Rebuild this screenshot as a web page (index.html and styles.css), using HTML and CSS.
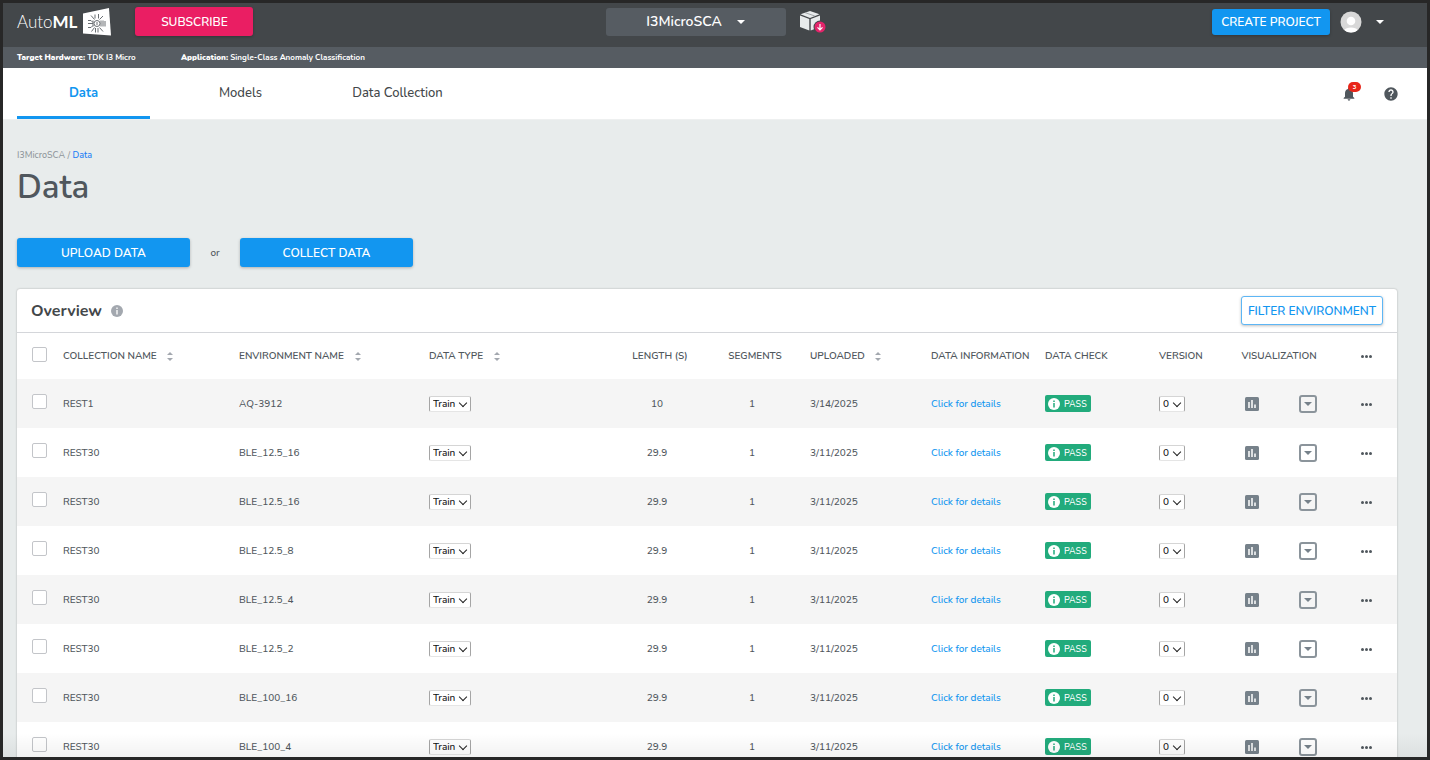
FILE: index.html
```html
<!DOCTYPE html>
<html lang="en">
<head>
  <meta charset="UTF-8">
  <meta name="viewport" content="width=device-width, initial-scale=1.0">
  <title>AutoML - Data</title>
  <link rel="stylesheet" href="styles.css">
</head>
<body>
  <div class="app">
    <header class="topbar">
      <div class="topbar-left">
        <a class="logo" href="#">
          <span class="logo-text">Auto<b>ML</b></span>
          <svg class="logo-mark" viewBox="0 0 28 28">
            <path d="M0 5.500 26 0 28 27.500 0 25.500z" fill="#fff"/>
            <g stroke="#6a6f73" stroke-width="1" fill="none">
              <circle cx="14" cy="15.500" r="3"/>
              <path d="M14 14v3 M10 12.500v6 M18 12.500v6"/>
              <path d="M5 12.500h3l2 2 M5 15.500h5 M5 19.500h3l2-2 M20 12.500v6 M22 13v5.500"/>
              <path d="M8 7.500l3.500 4 M12 6.500v4 M15.500 6v4.500 M20 8l-3.500 3.500 M8.500 23.500l3-4 M12.500 20v4.500 M15 20v4.500 M20 23.500l-3.500-4"/>
            </g>
          </svg>
        </a>
        <button class="btn btn-pink">SUBSCRIBE</button>
      </div>
      <div class="topbar-center">
        <button class="project-btn">I3MicroSCA <span class="caret"></span></button>
        <a class="package" href="#" aria-label="Download package">
          <svg width="28" height="24" viewBox="0 0 28 24">
            <path d="M11 1 20.500 4.300 11 8 1.500 4.300z" fill="#e8ebec"/>
            <path d="M1 5.500 10.300 9v11.500L1 17z" fill="#e8ebec"/>
            <path d="M11.700 9 21 5.500V17l-9.300 3.500z" fill="#e8ebec"/>
            <path d="M6 2.600 15.800 6" stroke="#8d9295" stroke-width=".8"/>
            <circle cx="21" cy="17" r="6.500" fill="#43474a"/>
            <circle cx="21" cy="17" r="5.500" fill="#e3246a"/>
            <path d="M21 14v5.500M18.500 17.300 21 19.800l2.500-2.500" stroke="#fff" stroke-width="1.200" fill="none"/>
          </svg>
        </a>
      </div>
      <div class="topbar-right">
        <button class="btn btn-create">CREATE PROJECT</button>
        <button class="user" aria-label="Account">
          <svg width="22" height="22" viewBox="0 0 22 22">
            <circle cx="11" cy="11" r="10.500" fill="#d8d8d8"/>
            <circle cx="11" cy="10" r="4.300" fill="#fff"/>
            <path d="M4.500 19.200C5.500 15.500 16.500 15.500 17.500 19.200 14 22.200 8 22.200 4.500 19.200z" fill="#fff"/>
          </svg>
          <span class="caret"></span>
        </button>
      </div>
    </header>

    <div class="infobar">
      <span class="hardware"><b>Target Hardware:</b> TDK I3 Micro</span>
      <span><b>Application:</b> Single-Class Anomaly Classification</span>
    </div>

    <nav class="tabs">
      <a class="tab active" href="#">Data</a>
      <a class="tab" href="#">Models</a>
      <a class="tab" href="#">Data Collection</a>
      <div class="tab-icons">
        <button class="bell" aria-label="Notifications">
          <svg width="16" height="16" viewBox="0 0 24 24" fill="#50575d"><path d="M12 22c1.100 0 2-.9 2-2h-4c0 1.100.9 2 2 2zm6-6v-5c0-3.070-1.640-5.640-4.500-6.320V4c0-.83-.67-1.500-1.500-1.500s-1.500.67-1.500 1.500v.68C7.630 5.360 6 7.920 6 11v5l-2 2v1h16v-1l-2-2z"/></svg>
          <span class="badge">3</span>
        </button>
        <button class="help" aria-label="Help">
          <svg width="16" height="16" viewBox="0 0 24 24" fill="#50575d"><path d="M12 2C6.480 2 2 6.480 2 12s4.480 10 10 10 10-4.480 10-10S17.520 2 12 2zm1 17h-2v-2h2v2zm2.070-7.750l-.9.920C13.450 12.900 13 13.500 13 15h-2v-.5c0-1.100.45-2.100 1.170-2.830l1.240-1.260c.37-.36.590-.86.590-1.410 0-1.100-.9-2-2-2s-2 .9-2 2H8c0-2.210 1.790-4 4-4s4 1.790 4 4c0 .88-.36 1.680-.93 2.250z"/></svg>
        </button>
      </div>
    </nav>

    <main class="content">
      <div class="breadcrumb">I3MicroSCA / <a href="#">Data</a></div>
      <h1>Data</h1>
      <div class="actions">
        <button class="btn btn-blue">UPLOAD DATA</button>
        <span class="or">or</span>
        <button class="btn btn-blue">COLLECT DATA</button>
      </div>

      <section class="card">
        <div class="card-header">
          <h2>Overview</h2>
          <svg width="12" height="12" viewBox="0 0 12 12"><circle cx="6" cy="6" r="6" fill="#a3a8af"/><path d="M6 2.500v1.500M6 5v4.500" stroke="#fff" stroke-width="1.300"/></svg>
          <button class="btn btn-outline">FILTER ENVIRONMENT</button>
        </div>
        <table>
          <colgroup>
            <col class="c-check"><col class="c-name"><col class="c-env"><col class="c-type"><col class="c-length">
            <col class="c-segments"><col class="c-uploaded"><col class="c-info"><col class="c-status"><col class="c-version">
            <col class="c-chart"><col class="c-drop"><col class="c-more">
          </colgroup>
          <thead>
            <tr>
              <th class="check"><input type="checkbox" aria-label="Select all"></th>
              <th>COLLECTION NAME <span class="sort"></span></th>
              <th>ENVIRONMENT NAME <span class="sort"></span></th>
              <th>DATA TYPE <span class="sort"></span></th>
              <th class="number">LENGTH (S)</th>
              <th class="number">SEGMENTS</th>
              <th>UPLOADED <span class="sort"></span></th>
              <th>DATA INFORMATION</th>
              <th>DATA CHECK</th>
              <th>VERSION</th>
              <th class="center" colspan="2">VISUALIZATION</th>
              <th class="center"><button class="more" aria-label="More"><i></i><i></i><i></i></button></th>
            </tr>
          </thead>
          <tbody id="rows"></tbody>
        </table>
      </section>
    </main>
  </div>
  <script>
    const data = [
      ['REST1', 'AQ-3912', '10', '3/14/2025'],
      ['REST30', 'BLE_12.5_16', '29.9', '3/11/2025'],
      ['REST30', 'BLE_12.5_16', '29.9', '3/11/2025'],
      ['REST30', 'BLE_12.5_8', '29.9', '3/11/2025'],
      ['REST30', 'BLE_12.5_4', '29.9', '3/11/2025'],
      ['REST30', 'BLE_12.5_2', '29.9', '3/11/2025'],
      ['REST30', 'BLE_100_16', '29.9', '3/11/2025'],
      ['REST30', 'BLE_100_4', '29.9', '3/11/2025']
    ];
    const rows = document.getElementById('rows');
    data.forEach(([name, env, length, uploaded]) => {
      const tr = document.createElement('tr');
      tr.innerHTML = `
        <td class="check"><input type="checkbox" aria-label="Select ${name}"></td>
        <td>${name}</td>
        <td>${env}</td>
        <td><span class="select"><select class="type" aria-label="Data type"><option>Train</option><option>Test</option></select></span></td>
        <td class="center">${length}</td>
        <td class="center">1</td>
        <td>${uploaded}</td>
        <td><a href="#">Click for details</a></td>
        <td><span class="pass"><svg width="12" height="12" viewBox="0 0 12 12"><circle cx="6" cy="6" r="6" fill="#fff"/><path d="M6 2.500v1.500M6 5v4.500" stroke="#22ab7c" stroke-width="1.500"/></svg>PASS</span></td>
        <td><span class="select"><select class="version" aria-label="Version"><option>0</option></select></span></td>
        <td class="center"><button class="icon-btn" aria-label="Chart"><svg width="14" height="14" viewBox="0 0 14 14"><rect width="14" height="14" rx="1.500" fill="#76818a"/><path d="M4 5v6M7 3v8M10 7.500v3.500" stroke="#fff" stroke-width="1.500"/></svg></button></td>
        <td class="center"><button class="drop" aria-label="Open"><span class="caret"></span></button></td>
        <td class="center"><button class="more" aria-label="More"><i></i><i></i><i></i></button></td>`;
      rows.appendChild(tr);
    });
  </script>
</body>
</html>
```
FILE: styles.css
```css
* {
  box-sizing: border-box;
}
body {
  margin: 0;
  font-family: Nunito, "Open Sans", sans-serif;
  font-size: 10px;
  font-weight: 500;
  color: #50575d;
  background-color: #e8ecec;
}
button, select, input {
  font-family: inherit;
  margin: 0;
}
button {
  border: none;
  padding: 0;
  background: none;
  cursor: pointer;
}
a {
  color: #1296f0;
  text-decoration: none;
}
svg {
  display: block;
}
.app {
  position: relative;
  height: 100vh;
  overflow: hidden;
  border: 3px solid #272727;
}
/* soft fade along the bottom edge */
.app::after {
  content: "";
  position: absolute;
  left: 0;
  right: 0;
  bottom: 0;
  height: 24px;
  background: linear-gradient(rgba(0, 0, 0, 0), rgba(0, 0, 0, 0.05));
  pointer-events: none;
}
.caret {
  width: 0;
  border: 4px solid transparent;
  border-top-color: #fff;
  border-bottom: none;
}
.btn {
  height: 29px;
  border-radius: 3px;
  color: #fff;
  font-size: 12px;
  font-weight: 600;
  box-shadow: 0 1px 3px rgba(0, 0, 0, 0.25);
}

/* top bar */
.topbar {
  display: grid;
  grid-template-columns: 1fr auto 1fr;
  height: 44px;
  padding: 0 14px;
  background-color: #43474a;
}
.topbar-left, .topbar-center, .topbar-right {
  display: flex;
  align-items: center;
  height: 37px;
}
.logo {
  display: flex;
  align-items: center;
  gap: 6px;
  margin-right: 24px;
  color: #fff;
}
.logo-text {
  font-family: Lato, sans-serif;
  font-size: 17px;
  font-weight: 300;
}
.logo-text b {
  font-weight: 700;
}
.logo-mark {
  width: 28px;
  height: 28px;
}
.btn-pink {
  width: 118px;
  background-color: #ea1e63;
}
.project-btn {
  display: flex;
  align-items: center;
  justify-content: center;
  gap: 15px;
  width: 180px;
  height: 28px;
  border-radius: 3px;
  background-color: #565c62;
  color: #fff;
  font-size: 14px;
  font-weight: 600;
}
.package {
  margin-left: 13px;
}
.topbar-center {
  margin-left: 2px;
}
.topbar-right {
  justify-content: flex-end;
}
.btn-create {
  width: 118px;
  height: 26px;
  background-color: #1296f0;
}
.user {
  display: flex;
  align-items: center;
  gap: 14px;
  margin: 0 29px 0 10px;
}

/* hardware / application line */
.infobar {
  display: flex;
  align-items: center;
  height: 21px;
  padding: 0 14px;
  background-color: #565c62;
  color: #fff;
  font-size: 8px;
  font-weight: 700;
}
.hardware {
  width: 164px;
}

/* tabs */
.tabs {
  display: flex;
  height: 52px;
  padding: 0 14px;
  background-color: #fff;
  border-bottom: 1px solid #eef0f0;
}
.tab {
  width: 133px;
  margin-right: 24px;
  border-bottom: 3px solid transparent;
  color: #43474a;
  font-size: 13px;
  line-height: 51px;
  height: 51px;
  text-align: center;
}
.tab.active {
  border-bottom-color: #1296f0;
  color: #1296f0;
  font-weight: 700;
}
.tab-icons {
  display: flex;
  align-items: center;
  gap: 26px;
  margin-left: auto;
  margin-right: 14px;
}
.bell {
  position: relative;
}
.badge {
  position: absolute;
  top: -4px;
  left: 7px;
  width: 13px;
  height: 10px;
  border-radius: 5px;
  background-color: #e8261a;
  color: #fff;
  font-size: 6px;
  font-weight: 700;
  line-height: 10px;
}

/* page content */
.content {
  padding: 28px 30px 0 14px;
}
.breadcrumb {
  color: #8f969b;
  font-size: 9px;
  line-height: 14px;
}
.breadcrumb a {
  color: #1a7df5;
}
h1 {
  margin: 3px 0 27px;
  font-size: 33px;
  font-weight: 600;
  line-height: 46px;
}
.actions {
  display: flex;
  align-items: center;
  margin-bottom: 22px;
}
.btn-blue {
  width: 173px;
  background-color: #1296f0;
}
.or {
  width: 50px;
  text-align: center;
}

/* overview card */
.card {
  background-color: #fff;
  border-radius: 3px;
  box-shadow: 0 0 2px rgba(0, 0, 0, 0.3);
}
.card-header {
  display: flex;
  align-items: center;
  gap: 9px;
  height: 44px;
  padding: 0 14px;
  border-bottom: 1px solid #d4d6da;
}
h2 {
  margin: 0;
  color: #43474a;
  font-size: 16px;
  font-weight: 700;
}
.btn-outline {
  width: 142px;
  margin-left: auto;
  border: 1px solid #5db6f5;
  background-color: #fff;
  color: #1296f0;
}
table {
  width: 100%;
  table-layout: fixed;
  border-collapse: collapse;
}
.c-check { width: 38px; }
.c-name { width: 176px; }
.c-env { width: 190px; }
.c-type { width: 191px; }
.c-length { width: 90px; }
.c-segments { width: 100px; }
.c-uploaded { width: 121px; }
.c-info { width: 114px; }
.c-status { width: 114px; }
.c-version { width: 72px; }
.c-chart { width: 58px; }
.c-drop { width: 54px; }
.c-more { width: 62px; }
th, td {
  height: 49px;
  padding: 0 0 0 8px;
  text-align: left;
  white-space: nowrap;
}
th {
  height: 46px;
  font-weight: 600;
}
tbody tr:nth-child(odd) {
  background-color: #f5f5f5;
}
.check {
  padding: 0 0 4px 15px;
}
.center {
  padding: 0;
  text-align: center;
}
.number {
  padding-left: 6px;
  text-align: center;
}
input[type="checkbox"] {
  display: block;
  appearance: none;
  width: 15px;
  height: 15px;
  border: 1px solid #c3c5c9;
  border-radius: 2px;
  background-color: #fff;
}
.sort {
  display: inline-flex;
  flex-direction: column;
  gap: 3px;
  margin-left: 8px;
  vertical-align: middle;
}
.sort::before, .sort::after {
  content: "";
  border: 3px solid transparent;
}
.sort::before {
  border-top: none;
  border-bottom-color: #a3a8af;
}
.sort::after {
  border-bottom: none;
  border-top-color: #a3a8af;
}
.select {
  position: relative;
  display: inline-block;
  vertical-align: middle;
}
.select::after {
  content: "";
  position: absolute;
  top: 4px;
  right: 5px;
  width: 5px;
  height: 5px;
  border: solid #222;
  border-width: 0 1px 1px 0;
  transform: rotate(45deg);
  pointer-events: none;
}
select {
  display: block;
  appearance: none;
  height: 16px;
  padding: 0 3px;
  border: 1px solid #a5a5a5;
  border-top-color: #d5d5d5;
  border-bottom-color: #e5e5e5;
  border-radius: 2px;
  background-color: #fff;
  color: #111;
  font-size: 10px;
  font-weight: 500;
  line-height: 14px;
}
.type {
  width: 42px;
}
.version {
  width: 26px;
}
.pass {
  display: inline-flex;
  align-items: center;
  gap: 4px;
  width: 46px;
  height: 17px;
  padding-left: 3px;
  border-radius: 2px;
  background-color: #22ab7c;
  color: #fff;
  font-size: 9px;
  vertical-align: middle;
}
.icon-btn, .drop, .more {
  vertical-align: middle;
}
.drop {
  display: inline-flex;
  align-items: center;
  justify-content: center;
  width: 18px;
  height: 18px;
  border: 2px solid #8b949b;
  border-radius: 3px;
}
.drop .caret {
  border-top-color: #76818a;
}
.more {
  display: inline-flex;
  gap: 1px;
}
.more i {
  width: 3px;
  height: 3px;
  border-radius: 50%;
  background-color: #50575d;
}
```
